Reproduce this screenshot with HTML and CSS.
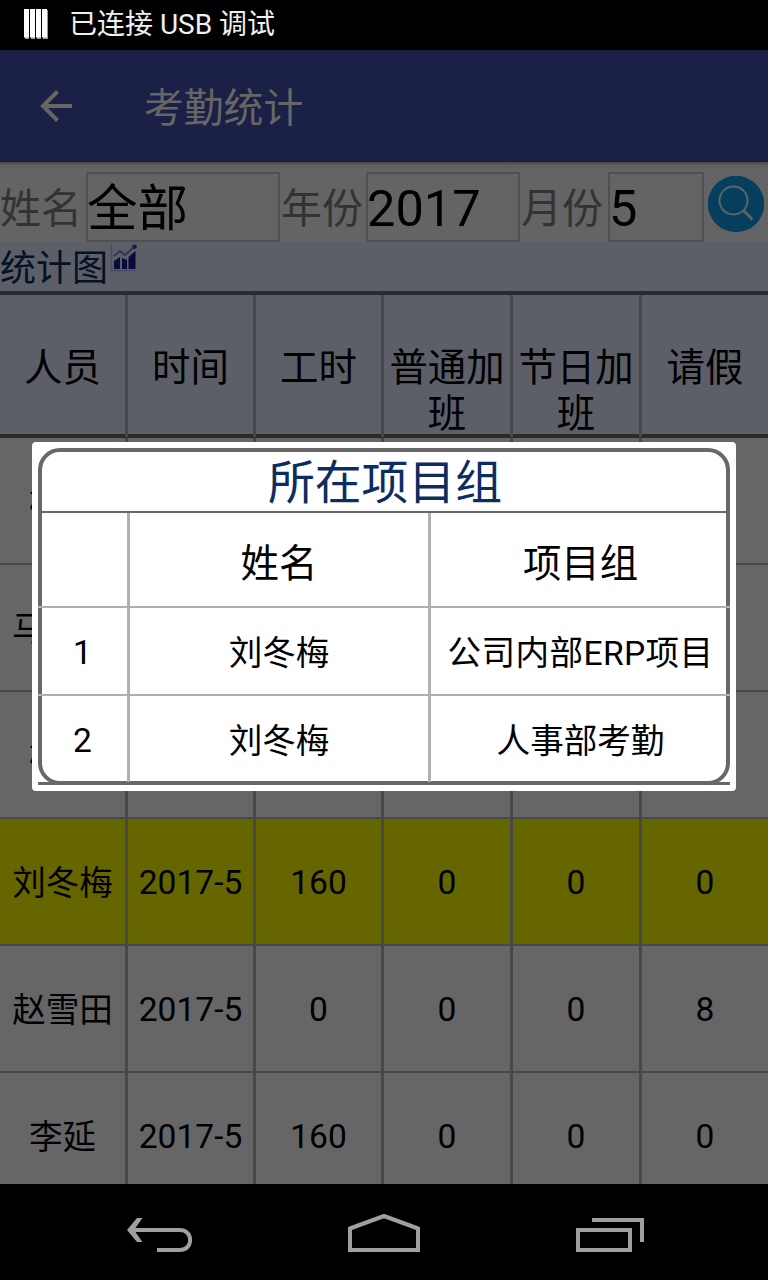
FILE: index.html
```html
<!DOCTYPE html>
<html lang="zh-CN">
<head>
<meta charset="utf-8">
<title>考勤统计</title>
<link rel="stylesheet" href="styles.css">
</head>
<body>
<div class="screen">
  <div class="status">
    <svg class="status-icon" width="24" height="30" viewBox="0 0 24 30"><path fill="#999" d="M1 1h4v29H1zM7 1h4v29H7zM13 1h4v29h-4zM19 1h5v29h-5z"/><path fill="#fff" d="M0 0h5v28.500H0zM6 0h5v28.500H6zM12 0h5v28.500h-5zM18 0h5v28.500h-5z"/></svg>
    <span class="status-text">已连接 USB 调试</span>
  </div>
  <header class="appbar">
    <svg class="back" width="32" height="32" viewBox="0 0 32 32"><path fill="none" stroke="#666" stroke-width="4" d="M32 16H4M17.500 1.500L3 16l14.500 14.500"/></svg>
    <h1 class="title">考勤统计</h1>
  </header>
  <main class="content">
    <form class="filters">
      <span class="label">姓名</span><span class="field field-name">全部</span>
      <span class="label">年份</span><span class="field field-year">2017</span>
      <span class="label">月份</span><span class="field field-month">5</span>
      <svg class="search" width="58" height="58" viewBox="0 0 58 58"><circle cx="29" cy="29" r="28.200" fill="#053f5d"/><circle cx="26.500" cy="25.500" r="14" fill="none" stroke="#5b666b" stroke-width="2"/><path d="M36 35l9.500 9.500" stroke="#5b666b" stroke-width="2.800"/></svg>
    </form>
    <div class="chartbar">
      <span class="chart-link">统计图</span>
      <svg class="chart-icon" width="28" height="28" viewBox="0 0 28 28"><path d="M1.500 0v26.500H27" fill="none" stroke="#474c67" stroke-width="1.500"/><path fill="#0b0a3c" d="M4 25V17l6-4v12zM12 25V14l5 2v9zM18.500 25V13l7-6v18z"/><path d="M4 12l6-5 5 4 9-8" fill="none" stroke="#303353" stroke-width="1.800"/><circle cx="24.500" cy="2.800" r="2.300" fill="#1a1b48"/></svg>
    </div>
    <div class="grid head">
      <div>人员</div><div>时间</div><div>工时</div><div>普通加<br>班</div><div>节日加<br>班</div><div>请假</div>
    </div>
    <div class="grid row"><div class="person short">杨</div><div></div><div></div><div></div><div></div><div></div></div>
    <div class="grid row"><div class="person clipped">马</div><div></div><div></div><div></div><div></div><div></div></div>
    <div class="grid row"><div class="person short">杨</div><div></div><div></div><div></div><div></div><div></div></div>
    <div class="grid row selected"><div class="person">刘冬梅</div><div>2017-5</div><div>160</div><div>0</div><div>0</div><div>0</div></div>
    <div class="grid row"><div class="person">赵雪田</div><div>2017-5</div><div>0</div><div>0</div><div>0</div><div>8</div></div>
    <div class="grid row"><div class="person">李延</div><div>2017-5</div><div>160</div><div>0</div><div>0</div><div>0</div></div>
  </main>
  <nav class="navbar">
    <svg width="768" height="96" viewBox="0 0 768 96" fill="none" stroke="#a0a0a0" stroke-width="4">
      <path d="M157 66h23c13.500 0 13.500-20 0-20h-50"/><path fill="#a0a0a0" stroke="none" d="M137 34h5.500l-8.500 12 8.500 12H137l-10-12z"/>
      <path d="M350 66V44.500l34-12.500L418 44.500v21.500z"/>
      <path d="M578 46h52v20h-52zM592 36h50v22"/>
    </svg>
  </nav>
  <section class="dialog">
    <div class="panel">
      <h2 class="panel-title">所在项目组</h2>
      <div class="prow phead"><div></div><div>姓名</div><div>项目组</div></div>
      <div class="prow"><div>1</div><div class="person">刘冬梅</div><div class="person project">公司内部ERP项目</div></div>
      <div class="prow"><div>2</div><div class="person">刘冬梅</div><div class="person">人事部考勤</div></div>
    </div>
  </section>
</div>
</body>
</html>
```
FILE: styles.css
```css
* { box-sizing: border-box; }
body { margin: 0; font-family: Roboto, "Noto Sans CJK SC", sans-serif; color: #000; background: #000; }
.screen { position: relative; width: 768px; height: 1280px; overflow: hidden; display: flex; flex-direction: column; }
.status { height: 50px; flex: none; display: flex; align-items: center; background: #000; color: #f0f0f0; padding-left: 24px; }
.status-icon { margin-right: 21px; margin-top: -2px; }
.status-text { font-size: 28px; line-height: 50px; margin-top: -1px; white-space: nowrap; }
.appbar { height: 112px; flex: none; display: flex; align-items: center; background: #1a2046; padding-left: 40px; }
.back { margin-right: 72px; }
.title { margin: 5px 0 0; font-size: 39.800px; line-height: 60px; font-weight: 400; color: #666; }
.content { flex: 1; min-height: 0; overflow: hidden; background: #666; }
.filters { height: 80px; display: flex; align-items: flex-start; padding-top: 10px; background: linear-gradient(#464646, #5d5d5d 3px, #646464 7px); }
.label { width: 86px; height: 70px; font-size: 41px; line-height: 75px; color: #333; white-space: nowrap; }
.field { height: 70px; font-size: 50.500px; line-height: 60px; padding-top: 4px; border: 2px solid #505050; border-radius: 2px; display: flex; align-items: center; white-space: nowrap; text-indent: -1px; }
.field-name { width: 194px; margin-right: 1px; }
.field-year { width: 154px; }
.field-month { width: 96px; }
.field-name + .label { width: 85px; }
.field-year + .label { width: 88px; padding-left: 1px; }
.search { margin: 3px 0 0 3px; flex: none; }
.chartbar { height: 49px; display: flex; background: #5c5f67; }
.chart-link { font-size: 36px; line-height: 55px; color: #041226; }
.chart-icon { margin: 2px 0 0 2px; }
.grid { display: grid; grid-template-columns: 128px 128px 128px 129px 129px 126px; }
.grid > div { display: flex; align-items: center; justify-content: center; text-align: center; border-right: 3px solid #484848; white-space: nowrap; }
.grid > div:last-child { border-right: 0; }
.head { height: 147px; border-top: 4px solid #2a2a2a; border-bottom: 4px solid #2a2a2a; background: #5c5f67; font-size: 38.400px; line-height: 46px; }
.head > div { align-items: flex-start; padding-top: 50px; }
.row { height: 127px; font-size: 33.600px; border-bottom: 2px solid #484848; }
.row > div { padding-top: 2px; }
.row > .person { padding-top: 0; padding-bottom: 3px; }
.grid > .short { justify-content: flex-start; padding-left: 29px; }
.grid > .clipped { justify-content: flex-start; padding-left: 12px; }
.selected { background: #666600; }
.navbar { height: 96px; flex: none; background: #000; }
.navbar svg { display: block; }
.dialog { position: absolute; left: 32px; top: 442px; width: 704px; height: 349px; padding: 6px; background: #fff; border-radius: 4px; }
.panel { position: relative; height: 337px; border-bottom: 3px solid #686868; }
.panel::before { content: ""; position: absolute; inset: 0 0 -3px 0; border: 4px solid #686868; border-radius: 22px; }
.panel-title { margin: 0 4px; height: 65px; padding: 6px 0 0 2px; border-bottom: 2px solid #686868; font-size: 46.800px; line-height: 58px; font-weight: 400; color: #0b2d60; text-align: center; }
.prow { position: relative; height: 88px; display: grid; grid-template-columns: 92px 301px 299px; border-bottom: 2px solid #b0b0b0; font-size: 33.600px; }
.prow > div { display: flex; align-items: center; justify-content: center; border-right: 3px solid #b0b0b0; padding-top: 2px; white-space: nowrap; }
.prow > div:last-child { border-right: 0; }
.prow > .person { padding-top: 0; padding-bottom: 2px; }
.prow > .project { letter-spacing: 0.400px; }
.phead { height: 95px; font-size: 38.400px; }
.phead.prow > div { padding: 0; }
.prow:last-child { border-bottom: 0; height: 86px; }
```
